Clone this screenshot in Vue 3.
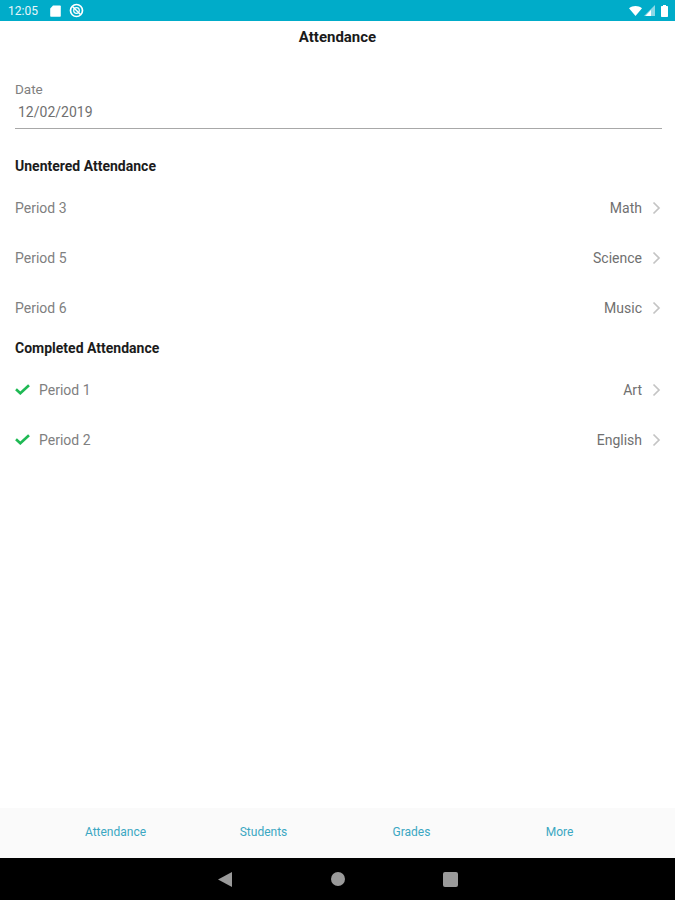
<script setup>
const unentered = [
  { period: "Period 3", subject: "Math" },
  { period: "Period 5", subject: "Science" },
  { period: "Period 6", subject: "Music" },
];
const completed = [
  { period: "Period 1", subject: "Art" },
  { period: "Period 2", subject: "English" },
];
const tabs = ["Attendance", "Students", "Grades", "More"];
</script>

<template>
  <div class="screen">
    <div class="status">
      <span class="time">12:05</span>
      <svg class="sd" width="11" height="12" viewBox="0 0 11 12">
        <path d="M3 0.5H10a.8.8 0 0 1 .8.8V11a.8.8 0 0 1-.8.8H1a.8.8 0 0 1-.8-.8V3.4Z" fill="#fff" />
      </svg>
      <svg class="sync" width="15" height="15" viewBox="0 0 15 15">
        <circle cx="7.5" cy="7.5" r="6" fill="none" stroke="#fff" stroke-width="1.7" />
        <circle cx="7.5" cy="7.5" r="2.8" fill="none" stroke="#fff" stroke-width="1.2" />
        <path d="M3.5 3.5L11.5 11.5" stroke="#fff" stroke-width="1.4" />
      </svg>
      <span class="spacer"></span>
      <svg width="13" height="10" viewBox="0 0 13 10">
        <path d="M0 2.2C3.6-.7 9.4-.7 13 2.2L6.5 10Z" fill="#fff" />
      </svg>
      <svg class="signal" width="11" height="11" viewBox="0 0 11 11">
        <path d="M11 0V11H0Z" fill="#fff" opacity="0.55" />
        <path d="M7 5V11H1.5Z" fill="#fff" />
      </svg>
      <svg class="battery" width="7" height="12" viewBox="0 0 7 12">
        <path d="M2 0H5V1H6.3a.7.7 0 0 1 .7.7V11.3a.7.7 0 0 1-.7.7H.7a.7.7 0 0 1-.7-.7V1.7A.7.7 0 0 1 .7 1H2Z" fill="#fff" />
      </svg>
    </div>

    <div class="title">Attendance</div>

    <div class="content">
      <div class="field">
        <div class="field-label">Date</div>
        <div class="field-value">12/02/2019</div>
      </div>

      <div class="section first">Unentered Attendance</div>
      <div v-for="item in unentered" :key="item.period" class="row">
        <span class="period">{{ item.period }}</span>
        <span class="subject">{{ item.subject }}</span>
        <svg class="chevron" width="9" height="14" viewBox="0 0 9 14">
          <path d="M1.5 1.5L7 7L1.5 12.5" fill="none" stroke="#c4c4c4" stroke-width="1.7" />
        </svg>
      </div>

      <div class="section">Completed Attendance</div>
      <div v-for="item in completed" :key="item.period" class="row">
        <svg class="check" width="15" height="11" viewBox="0 0 15 11">
          <path d="M1 5.3L5.3 9.3L14 1.2" fill="none" stroke="#1fb954" stroke-width="2.6" />
        </svg>
        <span class="period">{{ item.period }}</span>
        <span class="subject">{{ item.subject }}</span>
        <svg class="chevron" width="9" height="14" viewBox="0 0 9 14">
          <path d="M1.5 1.5L7 7L1.5 12.5" fill="none" stroke="#c4c4c4" stroke-width="1.7" />
        </svg>
      </div>
    </div>

    <div class="tabs">
      <div v-for="tab in tabs" :key="tab" class="tab">{{ tab }}</div>
    </div>

    <div class="nav">
      <svg class="back" width="14" height="15" viewBox="0 0 14 15">
        <path d="M14 0V15L0 7.5Z" fill="#9a9a9a" />
      </svg>
      <span class="home"></span>
      <span class="recent"></span>
    </div>
  </div>
</template>

<style>
body {
  background: #fff;
}
</style>

<style scoped>
.screen {
  width: 675px;
  height: 900px;
  display: flex;
  flex-direction: column;
  overflow: hidden;
  font-family: Roboto, "Liberation Sans", sans-serif;
  background: #fff;
}
.status {
  height: 21px;
  background: #00acc9;
  display: flex;
  align-items: center;
  padding: 0 7px 0 8px;
  color: #fff;
  flex: none;
}
.time {
  font-size: 12px;
  width: 42px;
  color: #e6f6f9;
}
.sync {
  margin-left: 8px;
}
.spacer {
  flex: 1;
}
.signal {
  margin-left: 2px;
}
.battery {
  margin-left: 6px;
}
.title {
  height: 31px;
  padding-bottom: 2px;
  flex: none;
  display: flex;
  align-items: center;
  justify-content: center;
  font-size: 15px;
  font-weight: 700;
  color: #1a1a1a;
}
.content {
  flex: 1;
  padding: 27px 14px 0 15px;
}
.field {
  height: 47px;
  margin-right: -1px;
  border-bottom: 1px solid #a8a8a8;
}
.field-label {
  font-size: 13.5px;
  line-height: 16px;
  color: #808080;
}
.field-value {
  font-size: 14px;
  line-height: 20px;
  margin-top: 5px;
  padding-left: 3px;
  color: #707070;
}
.section {
  font-size: 14px;
  font-weight: 700;
  line-height: 16px;
  color: #1c1c1c;
  margin-top: 7px;
  height: 25px;
}
.section.first {
  margin-top: 29px;
}
.row {
  height: 50px;
  display: flex;
  align-items: center;
  font-size: 14px;
  color: #808080;
}
.check {
  margin-right: 9px;
  margin-top: -2px;
}
.subject {
  margin-left: auto;
  margin-right: 10px;
  color: #707070;
}
.tabs {
  height: 48px;
  padding-bottom: 2px;
  flex: none;
  display: flex;
  align-items: center;
  justify-content: center;
  background: #fafafa;
  color: #3ba7c2;
  font-size: 12px;
}
.tab {
  width: 148px;
  text-align: center;
}
.nav {
  height: 42px;
  flex: none;
  padding-left: 1px;
  background: #000;
  display: flex;
  align-items: center;
  justify-content: center;
  gap: 98px;
}
.back {
  margin-right: 1px;
}
.home {
  width: 14px;
  height: 14px;
  border-radius: 50%;
  background: #9a9a9a;
}
.recent {
  width: 15px;
  height: 15px;
  border-radius: 2px;
  background: #9a9a9a;
}
</style>
